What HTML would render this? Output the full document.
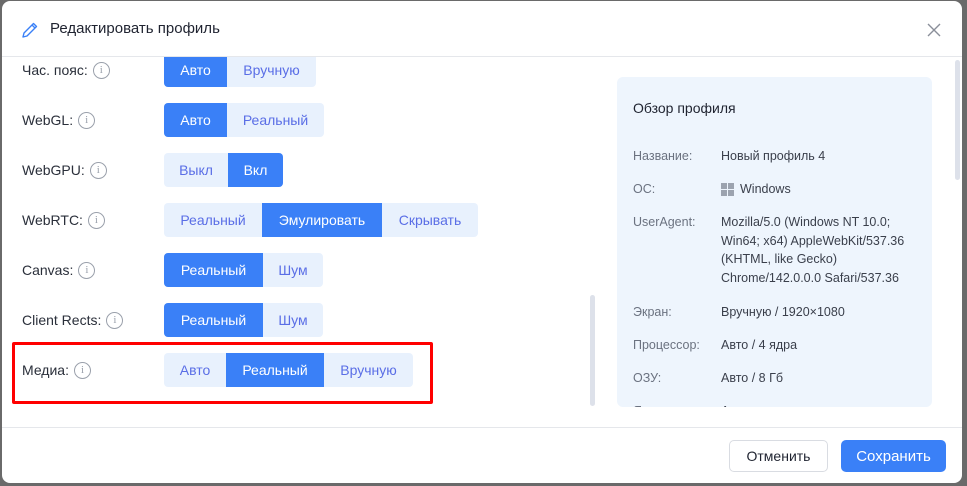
<!DOCTYPE html>
<html><head><meta charset="utf-8"><style>
*{margin:0;padding:0;box-sizing:border-box}
body{width:967px;height:486px;background:#6a6a6a;font-family:"Liberation Sans",sans-serif;position:relative;overflow:hidden}
.modal{position:absolute;left:2px;top:1px;width:960px;height:482px;background:#fff;border-radius:8px;overflow:hidden}
.abs{position:absolute}
.title{left:48px;top:19px;font-size:15px;color:#1f2330}
.hdiv{left:0;top:55px;width:960px;height:1px;background:#e5e7eb}
.fdiv{left:0;top:426px;width:960px;height:1px;background:#e5e7eb}
.lbl{font-size:14px;color:#2a2f3a;left:20px;height:34px;display:flex;align-items:center;gap:5px}
.info{width:17px;height:17px;border:1.2px solid #9aa0ab;border-radius:50%;font-size:11px;color:#9aa0ab;display:inline-flex;align-items:center;justify-content:center;font-family:"Liberation Serif",serif}
.seg{position:absolute;left:162px;height:34px;display:flex;border-radius:4px;overflow:hidden;background:#e8f1fd}
.seg span{display:flex;align-items:center;justify-content:center;font-size:14px;color:#5a6ee6;height:34px}
.seg span.on{background:#3a80f7;color:#fff}
.panel{left:615px;top:76px;width:315px;height:330px;background:#eef5fd;border-radius:6px;overflow:hidden}
.pt{left:16px;top:23px;font-size:14px;color:#1f2330}
.pl{left:16px;font-size:12.5px;color:#6b7280}
.pv{left:104px;font-size:12.5px;color:#3a3f4b;line-height:18.5px}
.btn{position:absolute;top:439px;height:32px;border-radius:5px;font-size:14px;display:flex;align-items:center;justify-content:center}
</style></head><body>
<div class="modal">
 <svg class="abs" style="left:19px;top:20px" width="18" height="18" viewBox="0 0 18 18"><path d="M12.5 2.5l3 3L6 15l-4 1 1-4z M11 4l3 3" fill="none" stroke="#3a80f7" stroke-width="1.4" stroke-linejoin="round"/></svg>
 <div class="abs title">Редактировать профиль</div>
 <svg class="abs" style="left:925px;top:22px" width="14" height="14" viewBox="0 0 14 14"><path d="M1 1l12 12M13 1L1 13" stroke="#8a8f99" stroke-width="1.4"/></svg>
 <div class="abs hdiv"></div>

 <div class="abs" style="left:0;top:56px;width:600px;height:370px;overflow:hidden">
  <div class="seg" style="top:-4px"><span class="on" style="width:63px">Авто</span><span style="width:89px">Вручную</span></div>
  <div class="abs lbl" style="top:-4px">Час. пояс: <span class="info">i</span></div>
  <div class="seg" style="top:46px"><span class="on" style="width:63px">Авто</span><span style="width:97px">Реальный</span></div>
  <div class="abs lbl" style="top:46px">WebGL: <span class="info">i</span></div>
  <div class="seg" style="top:96px"><span style="width:64px">Выкл</span><span class="on" style="width:55px">Вкл</span></div>
  <div class="abs lbl" style="top:96px">WebGPU: <span class="info">i</span></div>
  <div class="seg" style="top:146px"><span style="width:98px">Реальный</span><span class="on" style="width:120px">Эмулировать</span><span style="width:96px">Скрывать</span></div>
  <div class="abs lbl" style="top:146px">WebRTC: <span class="info">i</span></div>
  <div class="seg" style="top:196px"><span class="on" style="width:99px">Реальный</span><span style="width:60px">Шум</span></div>
  <div class="abs lbl" style="top:196px">Canvas: <span class="info">i</span></div>
  <div class="seg" style="top:246px"><span class="on" style="width:99px">Реальный</span><span style="width:60px">Шум</span></div>
  <div class="abs lbl" style="top:246px">Client Rects: <span class="info">i</span></div>
  <div class="seg" style="top:296px"><span style="width:62px">Авто</span><span class="on" style="width:98px">Реальный</span><span style="width:89px">Вручную</span></div>
  <div class="abs lbl" style="top:296px">Медиа: <span class="info">i</span></div>
  <div class="abs" style="left:10px;top:285px;width:421px;height:62px;border:3px solid #f00;border-radius:2px"></div>
  <div class="abs" style="left:588px;top:238px;width:5px;height:111px;background:#dde1ea;border-radius:3px"></div>
 </div>
 <div class="abs" style="left:953px;top:59px;width:5px;height:120px;background:#dde1ea;border-radius:3px"></div>

 <div class="abs panel">
  <div class="abs pt">Обзор профиля</div>
  <div class="abs pl" style="top:72px">Название:</div><div class="abs pv" style="top:70px">Новый профиль 4</div>
  <div class="abs pl" style="top:105px">ОС:</div>
  <div class="abs pv" style="top:103px;display:flex;align-items:center;gap:6px"><svg width="13" height="13" viewBox="0 0 13 13"><rect x="0" y="0" width="6" height="6" fill="#9ca3af"/><rect x="7" y="0" width="6" height="6" fill="#9ca3af"/><rect x="0" y="7" width="6" height="6" fill="#9ca3af"/><rect x="7" y="7" width="6" height="6" fill="#9ca3af"/></svg>Windows</div>
  <div class="abs pl" style="top:138px">UserAgent:</div>
  <div class="abs pv" style="top:136px;width:210px">Mozilla/5.0 (Windows NT 10.0; Win64; x64) AppleWebKit/537.36 (KHTML, like Gecko) Chrome/142.0.0.0 Safari/537.36</div>
  <div class="abs pl" style="top:228px">Экран:</div><div class="abs pv" style="top:226px">Вручную / 1920×1080</div>
  <div class="abs pl" style="top:261px">Процессор:</div><div class="abs pv" style="top:259px">Авто / 4 ядра</div>
  <div class="abs pl" style="top:294px">ОЗУ:</div><div class="abs pv" style="top:292px">Авто / 8 Гб</div>
  <div class="abs pl" style="top:327px">Язык:</div><div class="abs pv" style="top:325px">Авто</div>
 </div>

 <div class="abs fdiv"></div>
 <div class="btn" style="left:727px;width:99px;border:1px solid #d9dce2;color:#1f2330;background:#fff">Отменить</div>
 <div class="btn" style="left:839px;width:105px;background:#3a80f7;color:#fff;font-size:15px">Сохранить</div>
</div>
</body></html>
